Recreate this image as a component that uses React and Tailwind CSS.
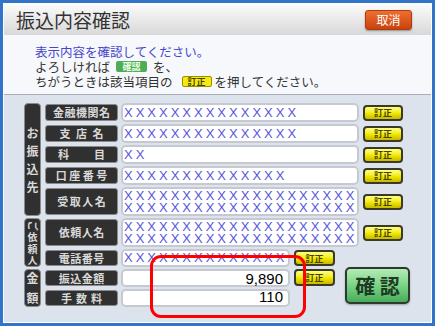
import React from 'react';

const xs = (n) => 'X'.repeat(n);

const FIELDS = [
	{ label: '金融機関名', gap: 'gap-[0.5px]', lines: [xs(15)] },
	{ label: '支店名', gap: 'gap-[5.5px]', lines: [xs(15)] },
	{ label: '科目', gap: 'gap-[25px]', lines: ['XX'] },
	{ label: '口座番号', gap: 'gap-[2.5px]', lines: [xs(14)] },
	{ label: '受取人名', gap: 'gap-[1.5px]', lines: [xs(20), xs(20)] },
	{ label: '依頼人名', gap: 'gap-[0.5px]', lines: [xs(20), xs(20)] },
];

const ROW_START = ['row-start-1', 'row-start-2', 'row-start-3', 'row-start-4', 'row-start-5', 'row-start-6', 'row-start-7', 'row-start-8', 'row-start-9'];

const labelBox = 'flex items-center justify-center whitespace-nowrap rounded-[3px] border border-[#8a8a8a] bg-[#303030] text-[11px] font-bold leading-none text-[#d9d9d9]';
const valueBox = 'rounded-[5px] border-2 border-[#c6cad0] bg-white';
const xText = "whitespace-nowrap font-['Liberation_Sans',sans-serif] text-[13px] leading-[12px] tracking-[3px] text-[#5656d8]";

function SpacedText({ text, gap }) {
	return (
		<span className={`flex ${gap}`}>
			{[...text].map((ch, i) => (
				<span key={i}>{ch}</span>
			))}
		</span>
	);
}

function FixButton({ className = '' }) {
	return (
		<span className={`flex items-center justify-center rounded-[4px] border-2 border-[#3b3a28] bg-gradient-to-b from-[#ffff7a] via-[#f2ea00] to-[#c8ba00] text-[9px] font-bold leading-none text-[#4a4300] ${className}`}>
			訂正
		</span>
	);
}

function SectionLabel({ className = '', children }) {
	return (
		<div className={`flex w-[17px] flex-col items-center justify-center rounded-[4px] border border-[#8a8a8a] bg-[#303030] font-bold text-[#d9d9d9] ${className}`}>
			{children}
		</div>
	);
}

export default function App() {
	return (
		<div className="relative h-[326px] w-[435px] overflow-hidden font-['Noto_Sans_CJK_JP','Noto_Sans',sans-serif]">
			<div className="flex h-full w-full flex-col border-[3px] border-[#3274c8] bg-[#dde3ec]">
				<div className="flex flex-1 flex-col border border-white">
					{/* title bar */}
					<div className="flex h-[31px] items-center justify-between bg-gradient-to-b from-[#fbfbfb] to-[#d8d8d8] pl-[12px] pr-[19px]">
						<h1 className="text-[19px] leading-none text-[#333]">振込内容確認</h1>
						<button
							type="button"
							className="h-[20px] w-[47px] rounded-[3px] border border-[#b23a08] bg-gradient-to-b from-[#ee6e30] to-[#c8420c] text-[12px] leading-none text-white shadow-[0_1px_2px_rgba(0,0,0,0.35)]"
						>
							取消
						</button>
					</div>

					{/* message */}
					<div className="h-[60px] border-b border-[#a7aeb8] bg-[#f6f8fb] pl-[31px] pt-[9px] text-[12.5px] leading-[15px] text-[#333]">
						<p className="text-[#4646cc]">表示内容を確認してください。</p>
						<p className="flex items-center">
							よろしければ
							<span className="mx-[6px] flex h-[11px] w-[31px] items-center justify-center rounded-[2px] bg-[#4fae55] text-[9px] font-bold leading-none text-[#e8ffe8]">確認</span>
							を、
						</p>
						<p className="flex items-center">
							ちがうときは該当項目の
							<span className="ml-[9px] mr-[3px] flex h-[11px] w-[30px] items-center justify-center rounded-[2px] border border-[#9a9000] bg-[#f4ea10] text-[9px] font-bold leading-none text-[#4a4300]">訂正</span>
							を押してください。
						</p>
					</div>

					{/* detail panel */}
					<div className="flex-1 pl-[20px] pt-[8px]">
						<div className="grid grid-cols-[21px_76px_1fr] grid-rows-[19px_19px_19px_19px_29px_29px_18px_18px_18px] gap-y-[2px]">
							<SectionLabel className="col-start-1 row-span-5 row-start-1 text-[12px] leading-[18px]">
								<span>お</span>
								<span>振</span>
								<span>込</span>
								<span>先</span>
							</SectionLabel>
							<SectionLabel className="col-start-1 row-span-2 row-start-6 text-[10px] leading-[11.5px]">
								<span className="inline-block rotate-90">ご</span>
								<span>依</span>
								<span>頼</span>
								<span>人</span>
							</SectionLabel>
							<SectionLabel className="col-start-1 row-span-2 row-start-8 text-[12px] leading-[20px]">
								<span>金</span>
								<span>額</span>
							</SectionLabel>

							{FIELDS.map((field, i) => (
								<React.Fragment key={field.label}>
									<div className={`col-start-2 ${ROW_START[i]} my-[1px] w-[73px] ${labelBox}`}>
										<SpacedText text={field.label} gap={field.gap} />
									</div>
									<div className={`col-start-3 ${ROW_START[i]} flex items-center`}>
										<div className={`flex h-full w-[238px] flex-col justify-center pl-[1px] ${valueBox}`}>
											{field.lines.map((line, j) => (
												<span key={j} className={xText}>{line}</span>
											))}
										</div>
										<FixButton className="ml-[4px] h-[16px] w-[40px]" />
									</div>
								</React.Fragment>
							))}

							<div className={`col-start-2 row-start-7 my-[1px] w-[73px] ${labelBox}`}>
								<SpacedText text="電話番号" gap="gap-[0.5px]" />
							</div>
							<div className={`col-start-2 row-start-8 my-[1px] w-[73px] ${labelBox}`}>
								<SpacedText text="振込金額" gap="gap-[0.5px]" />
							</div>
							<div className={`col-start-2 row-start-9 my-[1px] w-[73px] ${labelBox}`}>
								<SpacedText text="手数料" gap="gap-[4px]" />
							</div>

							<div className="col-start-3 row-span-3 row-start-7 grid grid-cols-[169px_41px_1fr] grid-rows-[18px_18px_18px] gap-x-[4px] gap-y-[2px]">
								<div className={`flex items-center overflow-hidden pl-[1px] ${valueBox}`}>
									<span className={xText}>{xs(14)}</span>
								</div>
								<FixButton className="my-[1px] h-[16px]" />
								<div />

								<div className={`flex items-center justify-end pr-[5px] font-['Liberation_Sans',sans-serif] text-[15px] leading-none text-black ${valueBox}`}>
									9,890
								</div>
								<FixButton className="h-[17px]" />
								<button
									type="button"
									className="row-span-2 -mt-[2px] ml-[6px] flex h-[37px] w-[65px] items-center justify-center rounded-[5px] border-2 border-[#2e3a30] bg-gradient-to-b from-[#b4ecb4] via-[#7ad385] to-[#45ad5a] text-[20px] font-bold leading-none text-[#1f3a24] shadow-[0_1px_2px_rgba(0,0,0,0.3)]"
								>
									確&nbsp;認
								</button>

								<div className={`flex items-start justify-end pr-[5px] font-['Liberation_Sans',sans-serif] text-[15px] leading-[12px] text-black ${valueBox}`}>
									110
								</div>
								<div />
							</div>
						</div>
					</div>
				</div>
			</div>

			{/* red annotation ring */}
			<div className="absolute left-[150px] top-[255px] h-[63px] w-[156px] rounded-[11px] border-[3px] border-[#ff0000]" />
		</div>
	);
}
